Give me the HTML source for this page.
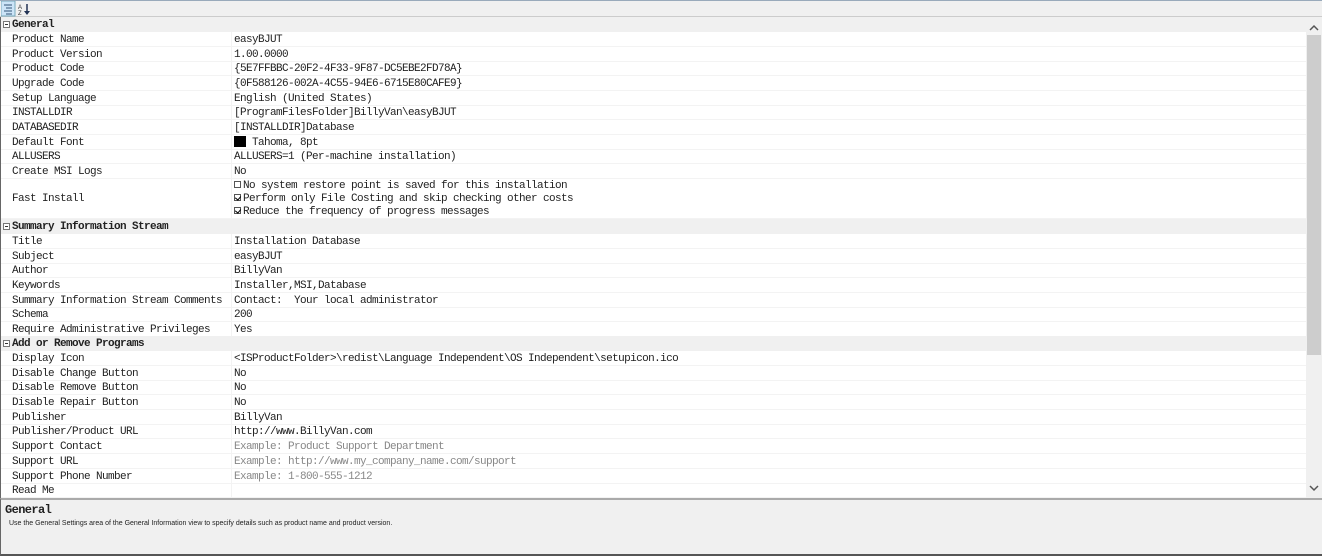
<!DOCTYPE html>
<html><head><style>
*{margin:0;padding:0;box-sizing:border-box}
body{width:1322px;height:556px;background:#fff;position:relative;overflow:hidden;font-family:"Liberation Mono","Noto Sans CJK SC",monospace;font-size:11px;letter-spacing:-0.6px;color:#222}
.tb{position:absolute;left:0;top:0;width:1322px;height:17px;background:#f0f0f0;border-top:1px solid #9ab;border-bottom:1px solid #ccc}
.grid{position:absolute;left:0;top:17px;width:1306px;height:481px;border-left:1px solid #666}
.r{position:absolute;left:1px;width:1305px;height:15px;line-height:15px;border-bottom:1px solid #f3f3f3;white-space:pre}
.r .n{position:absolute;left:11px;top:1px}
.r .v{position:absolute;left:233px;top:1px}
.r .sep{position:absolute;left:230px;top:0;bottom:0;border-left:1px solid #f3f3f3}
.h{background:#f0f0f0;font-weight:bold;border-bottom:none}
.h .n{left:11px}
.h .b{position:absolute;left:2px;top:4px;width:7px;height:7px;border:1px solid #777;background:#fff}
.h .b:after{content:"";position:absolute;left:1px;top:2px;width:3px;height:1px;background:#333}
.g{color:#888}
.sb{position:absolute;left:1306px;top:17px;width:16px;height:481px;background:#f0f0f0}
.th{position:absolute;left:1307px;top:35px;width:14px;height:320px;background:#cdcdcd}
.desc{position:absolute;left:0;top:498px;width:1322px;height:58px;background:#f0f0f0;border-top:2px solid #aaa;border-left:1px solid #666;border-bottom:2px solid #555}
.cb{display:inline-block;width:7px;height:7px;border:1px solid #555;margin-right:2px;vertical-align:0px;position:relative;background:#fff}
.cb.c:after{content:"";position:absolute;left:1px;top:0;width:3px;height:4px;border-right:1.5px solid #000;border-bottom:1.5px solid #000;transform:rotate(40deg)}
</style></head><body>
<div class="tb">
<svg width="34" height="16" style="position:absolute;left:1px;top:0">
<rect x="0" y="0" width="14" height="15" fill="#cce4f7" stroke="#7ab" stroke-width="1"/>
<g stroke="#357" stroke-width="1"><line x1="3" y1="4" x2="11" y2="4"/><line x1="5" y1="7" x2="11" y2="7"/><line x1="3" y1="10" x2="11" y2="10"/><line x1="5" y1="13" x2="11" y2="13"/></g>
<text x="17" y="8" font-size="6" fill="#333" font-family="Liberation Sans">A</text><text x="17" y="14" font-size="6" fill="#333" font-family="Liberation Sans">Z</text>
<line x1="26" y1="3" x2="26" y2="13" stroke="#235" stroke-width="1.5"/><path d="M23 10 L26 14 L29 10" fill="#235"/>
</svg>
</div>
<div class="grid"></div>
<div class="r h" style="top:17px"><span class="b"></span><span class="n">General</span></div>
<div class="r" style="top:32px"><span class="sep"></span><span class="n">Product Name</span><span class="v">easyBJUT</span></div>
<div class="r" style="top:47px"><span class="sep"></span><span class="n">Product Version</span><span class="v">1.00.0000</span></div>
<div class="r" style="top:61px"><span class="sep"></span><span class="n">Product Code</span><span class="v">{5E7FFBBC-20F2-4F33-9F87-DC5EBE2FD78A}</span></div>
<div class="r" style="top:76px"><span class="sep"></span><span class="n">Upgrade Code</span><span class="v">{0F588126-002A-4C55-94E6-6715E80CAFE9}</span></div>
<div class="r" style="top:91px"><span class="sep"></span><span class="n">Setup Language</span><span class="v">English (United States)</span></div>
<div class="r" style="top:105px"><span class="sep"></span><span class="n">INSTALLDIR</span><span class="v">[ProgramFilesFolder]BillyVan\easyBJUT</span></div>
<div class="r" style="top:120px"><span class="sep"></span><span class="n">DATABASEDIR</span><span class="v">[INSTALLDIR]Database</span></div>
<div class="r" style="top:135px"><span class="sep"></span><span class="n">Default Font</span><span class="v"><span style="display:inline-block;width:12px;height:11px;background:#000;vertical-align:-2px"></span> Tahoma, 8pt</span></div>
<div class="r" style="top:149px"><span class="sep"></span><span class="n">ALLUSERS</span><span class="v">ALLUSERS=1 (Per-machine installation)</span></div>
<div class="r" style="top:164px"><span class="sep"></span><span class="n">Create MSI Logs</span><span class="v">No</span></div>
<div class="r" style="top:179px;height:40px;line-height:13px"><span class="sep"></span><span class="n" style="top:14px">Fast Install</span><span class="v" style="top:1px"><span class="cb"></span>No system restore point is saved for this installation<br><span class="cb c"></span>Perform only File Costing and skip checking other costs<br><span class="cb c"></span>Reduce the frequency of progress messages</span></div>
<div class="r h" style="top:219px"><span class="b"></span><span class="n">Summary Information Stream</span></div>
<div class="r" style="top:234px"><span class="sep"></span><span class="n">Title</span><span class="v">Installation Database</span></div>
<div class="r" style="top:249px"><span class="sep"></span><span class="n">Subject</span><span class="v">easyBJUT</span></div>
<div class="r" style="top:263px"><span class="sep"></span><span class="n">Author</span><span class="v">BillyVan</span></div>
<div class="r" style="top:278px"><span class="sep"></span><span class="n">Keywords</span><span class="v">Installer,MSI,Database</span></div>
<div class="r" style="top:293px"><span class="sep"></span><span class="n">Summary Information Stream Comments</span><span class="v">Contact:  Your local administrator</span></div>
<div class="r" style="top:307px"><span class="sep"></span><span class="n">Schema</span><span class="v">200</span></div>
<div class="r" style="top:322px"><span class="sep"></span><span class="n">Require Administrative Privileges</span><span class="v">Yes</span></div>
<div class="r h" style="top:336px"><span class="b"></span><span class="n">Add or Remove Programs</span></div>
<div class="r" style="top:351px"><span class="sep"></span><span class="n">Display Icon</span><span class="v">&lt;ISProductFolder&gt;\redist\Language Independent\OS Independent\setupicon.ico</span></div>
<div class="r" style="top:366px"><span class="sep"></span><span class="n">Disable Change Button</span><span class="v">No</span></div>
<div class="r" style="top:380px"><span class="sep"></span><span class="n">Disable Remove Button</span><span class="v">No</span></div>
<div class="r" style="top:395px"><span class="sep"></span><span class="n">Disable Repair Button</span><span class="v">No</span></div>
<div class="r" style="top:410px"><span class="sep"></span><span class="n">Publisher</span><span class="v">BillyVan</span></div>
<div class="r" style="top:424px"><span class="sep"></span><span class="n">Publisher/Product URL</span><span class="v">http://www.BillyVan.com</span></div>
<div class="r" style="top:439px"><span class="sep"></span><span class="n">Support Contact</span><span class="v g">Example: Product Support Department</span></div>
<div class="r" style="top:454px"><span class="sep"></span><span class="n">Support URL</span><span class="v g">Example: http://www.my_company_name.com/support</span></div>
<div class="r" style="top:469px"><span class="sep"></span><span class="n">Support Phone Number</span><span class="v g">Example: 1-800-555-1212</span></div>
<div class="r" style="top:483px"><span class="sep"></span><span class="n">Read Me</span></div>
<div class="sb"></div>
<div class="th"></div>
<svg width="16" height="16" style="position:absolute;left:1306px;top:20px"><path d="M4 10 L8 6 L12 10" fill="none" stroke="#555" stroke-width="1.5"/></svg>
<svg width="16" height="16" style="position:absolute;left:1306px;top:480px"><path d="M4 6 L8 10 L12 6" fill="none" stroke="#555" stroke-width="1.5"/></svg>
<div class="desc">
<div style="position:absolute;left:4px;top:3px;font-weight:bold;font-size:12px">General</div>
<div style="position:absolute;left:8px;top:20px;font-family:'Liberation Sans',sans-serif;font-size:7px;letter-spacing:0;color:#222">Use the General Settings area of the General Information view to specify details such as product name and product version.</div>
</div>
</body></html>
